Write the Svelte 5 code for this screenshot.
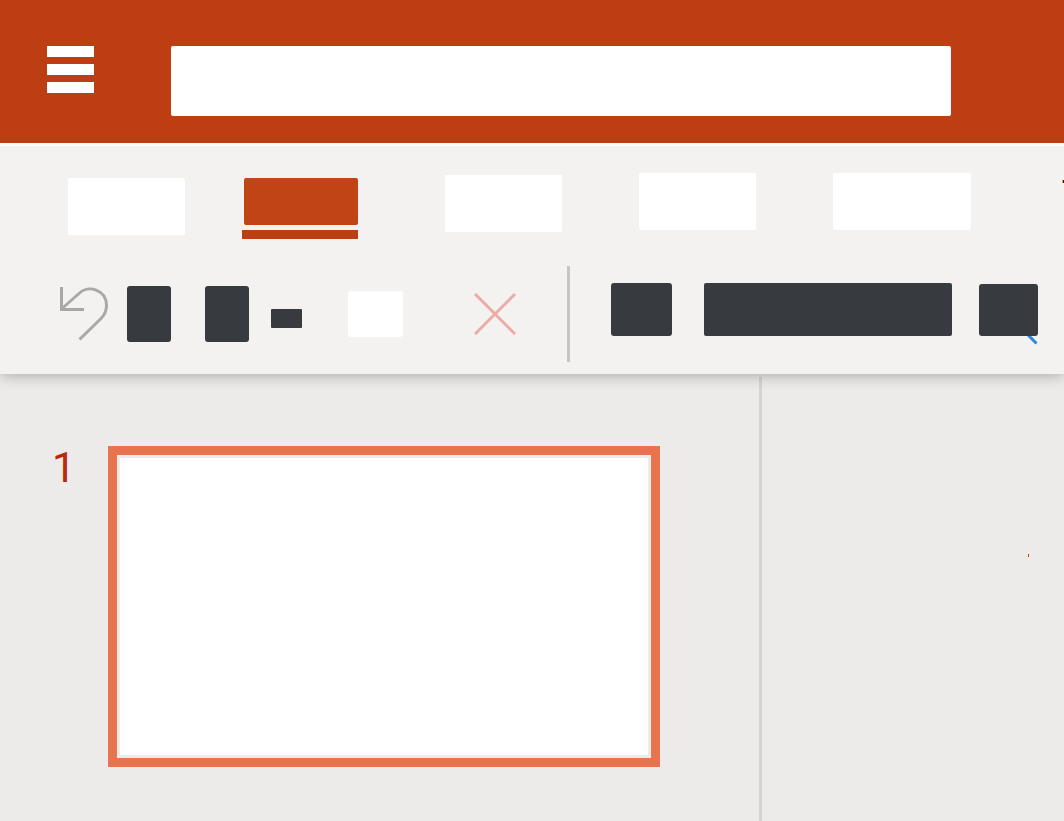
<script>
  let query = $state('');
  let font = $state('');
</script>

<div class="app">
  <header class="titlebar">
    <button class="menu" aria-label="Menu"><i></i><i></i><i></i></button>
    <input class="search" type="text" aria-label="Search" bind:value={query} />
  </header>

  <section class="ribbon">
    <nav class="tabs" aria-label="Ribbon tabs">
      <div class="group primary">
        <button class="tab" aria-label="File"></button>
        <button class="tab active" aria-label="Home" aria-current="page"><span></span></button>
      </div>
      <div class="group secondary">
        <button class="tab first" aria-label="Insert"></button>
        <button class="tab" aria-label="Design"></button>
        <button class="tab wide" aria-label="Transitions"></button>
      </div>
      <span class="more"></span>
    </nav>

    <div class="tools">
      <div class="edit">
        <button class="undo" aria-label="Undo">
          <svg width="50" height="56" viewBox="0 0 50 56" fill="none" stroke="#a9a8a7" stroke-width="3">
            <path d="M2.500 1V23.500H25" />
            <path d="M3 22.500L20 7.500C29 -1.500 47.500 3.500 47.500 19.500C47.500 25 45.500 29 42 32.500L20.500 53.500" />
          </svg>
        </button>
        <button class="block tall" aria-label="Redo"></button>
        <button class="block tall paste" aria-label="Paste"></button>
        <button class="caret" aria-label="Paste options"><span class="block"></span></button>
        <button class="light" aria-label="Copy"></button>
        <button class="remove" aria-label="Delete">
          <svg width="42" height="42" viewBox="0 0 42 42" stroke="#edaaa6" stroke-width="3">
            <path d="M1 1L41 41M41 1L1 41" />
          </svg>
        </button>
      </div>
      <div class="fonts">
        <button class="block style" aria-label="Layout"></button>
        <input class="block name" type="text" aria-label="Font" bind:value={font} />
        <button class="block find" aria-label="Find">
          <svg width="11" height="10" viewBox="0 0 11 10" stroke="#2b88d8" stroke-width="3">
            <path d="M0 -2L9.500 7.500" />
          </svg>
        </button>
      </div>
    </div>
  </section>

  <main>
    <aside>
      <span class="number">1</span>
      <button class="slide" aria-label="Slide 1"></button>
    </aside>
    <section class="canvas" aria-label="Canvas"><i></i></section>
  </main>
</div>

<style>
  :global(body) { margin: 0; background: #ecebe9; }
  * { box-sizing: border-box; }
  button, input { border: 0; padding: 0; margin: 0; flex: none; border-radius: 2px; }
  button { background: none; }
  svg { display: block; }
  .app {
    min-height: 100vh;
    display: flex;
    flex-direction: column;
    overflow: hidden;
    font-family: Roboto, sans-serif;
  }
  .titlebar {
    position: relative;
    z-index: 1;
    display: flex;
    align-items: flex-start;
    gap: 77px;
    padding: 46px 113px 27px 47px;
    background: #bd3e12;
    border-bottom: 3px solid #fff;
  }
  .menu { display: grid; gap: 7px; width: 47px; }
  .menu i { height: 11px; background: #fff; }
  .search { flex: 1; min-width: 0; height: 70px; background: #fff; }
  .ribbon {
    position: relative;
    background: #f3f2f0;
    padding: 27px 0 12px;
    box-shadow: 0 1px 14px rgba(0, 0, 0, 0.3);
  }
  .tabs { display: flex; padding-left: 68px; height: 93px; }
  .group { display: flex; align-items: flex-start; flex: none; }
  .primary { gap: 57px; padding-top: 5px; margin-right: 87px; }
  .secondary { gap: 77px; }
  .tab { width: 117px; height: 57px; background: #fff; }
  .first { height: 59px; border-top: 2px solid #f3f2f0; }
  .wide { width: 138px; }
  .active {
    width: 116px;
    height: 61px;
    padding: 0 0 5px 2px;
    background: none;
    border-bottom: 9px solid #bd3e12;
    border-radius: 0;
  }
  .active span { display: block; height: 47px; border-radius: 2px; background: #c14417; }
  .more { width: 2px; height: 3px; margin: 7px 0 0 auto; background: #201c18; border-left: 1px solid #f0a040; }
  .tools { display: flex; align-items: center; padding: 0 26px 0 59px; }
  .edit {
    display: flex;
    align-items: center;
    height: 96px;
    padding-right: 51px;
    border-right: 3px solid #c6c5c4;
  }
  .block { background: #373a3e; border-radius: 3px; }
  .undo { margin-right: 18px; }
  .tall { width: 44px; height: 56px; }
  .paste { margin: 0 22px 0 34px; }
  .caret { width: 31px; padding-top: 9px; }
  .caret span { display: block; height: 19px; border-radius: 1px; }
  .light { width: 55px; height: 46px; margin: 0 71px 0 46px; background: #fff; border-radius: 3px; }
  .fonts {
    display: flex;
    align-items: flex-end;
    flex: 1;
    min-width: 0;
    padding: 0 0 9px 41px;
  }
  .style { width: 61px; height: 53px; }
  .name { flex: 1; min-width: 0; height: 53px; margin: 0 27px 0 32px; border-radius: 2px; color: #fff; }
  .find { position: relative; width: 59px; height: 52px; }
  .find svg { position: absolute; top: 100%; right: 0; }
  main { flex: 1; display: grid; grid-template-columns: minmax(0, 762fr) minmax(0, 302fr); padding-top: 3px; }
  aside {
    display: flex;
    align-items: flex-start;
    gap: 32px;
    padding: 69px 99px 54px 52px;
    border-right: 3px solid #d2d4d5;
  }
  .number { width: 24px; font-size: 42px; font-weight: 400; line-height: 44px; color: #b9290b; }
  .slide {
    flex: 1;
    min-width: 0;
    aspect-ratio: 552 / 321;
    background: #fff;
    border: 9px solid #e8734e;
    border-radius: 0;
    box-shadow: inset 0 0 0 3px #ebebea;
  }
  .canvas { position: relative; }
  .canvas i { position: absolute; left: 266px; top: 177px; width: 1px; height: 3px; background: #d83b01; }
</style>
